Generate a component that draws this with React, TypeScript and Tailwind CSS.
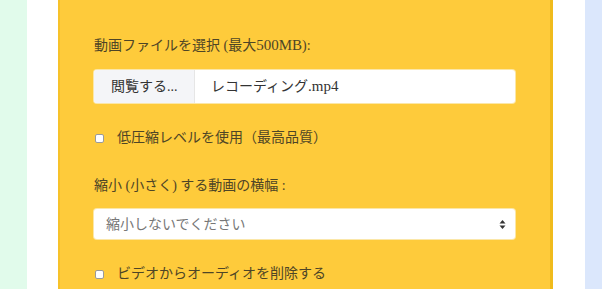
import React from "react";

const font = { fontFamily: '"Liberation Serif", "Noto Sans CJK JP", serif' };

function Check({ label }: { label: string }) {
  return (
    <div className="flex items-center h-[20px]">
      <span className="ml-[1px] w-[9px] h-[9px] border border-[#9a9a9a] bg-white rounded-[2px] shrink-0" />
      <span className="ml-[13px] text-[14px] text-[#4e4526] leading-[20px] whitespace-nowrap">{label}</span>
    </div>
  );
}

export default function App() {
  return (
    <div className="flex w-[602px] h-[289px] overflow-hidden" style={font}>
      <div className="w-[27px] bg-[#e1fbeb] shrink-0" />
      <div className="w-[31px] bg-white shrink-0" />
      <div className="w-[495px] shrink-0 bg-[#fecb3b] border-l-[2px] border-l-[#f7c22a] border-r-[3px] border-r-[#f0bb1c] pl-[34px] pr-[35px] pt-[35px]">
        <div className="h-[20px] leading-[20px] text-[14px] text-[#4e4526] whitespace-nowrap">動画ファイルを選択 (最大<span className="text-[15px]">500MB</span>):</div>
        <div className="mt-[15px] h-[33px] flex bg-white rounded-[3px] overflow-hidden shadow-[0_0_0_1px_#fbe7a8]">
          <div className="w-[101px] bg-[#f4f5f8] border-r border-[#e6e6e6] flex items-center pl-[17px] text-[14px] text-[#333] whitespace-nowrap">閲覧する...</div>
          <div className="flex items-center pl-[16px] text-[14px] text-[#333] whitespace-nowrap">レコーディング<span className="text-[15px]">.mp4</span></div>
        </div>
        <div className="mt-[25px]">
          <Check label="低圧縮レベルを使用（最高品質）" />
        </div>
        <div className="mt-[28px] h-[20px] leading-[20px] text-[14px] text-[#4e4526] whitespace-nowrap">縮小 (小さく) する動画の横幅 :</div>
        <div className="mt-[13px] h-[30px] flex items-center justify-between bg-white rounded-[3px] shadow-[0_0_0_1px_#fbe7a8] pl-[12px] pr-[9px]">
          <span className="text-[14px] text-[#777] whitespace-nowrap">縮小しないでください</span>
          <svg width="7" height="11" viewBox="0 0 7 11">
            <path d="M3.5 1 L6.5 4.5 L0.5 4.5 Z" fill="#333" />
            <path d="M3.5 10 L6.5 6.5 L0.5 6.5 Z" fill="#333" />
          </svg>
        </div>
        <div className="mt-[25px]">
          <Check label="ビデオからオーディオを削除する" />
        </div>
      </div>
      <div className="w-[32px] bg-white shrink-0" />
      <div className="flex-1 bg-[#dbe7fc]" />
    </div>
  );
}
